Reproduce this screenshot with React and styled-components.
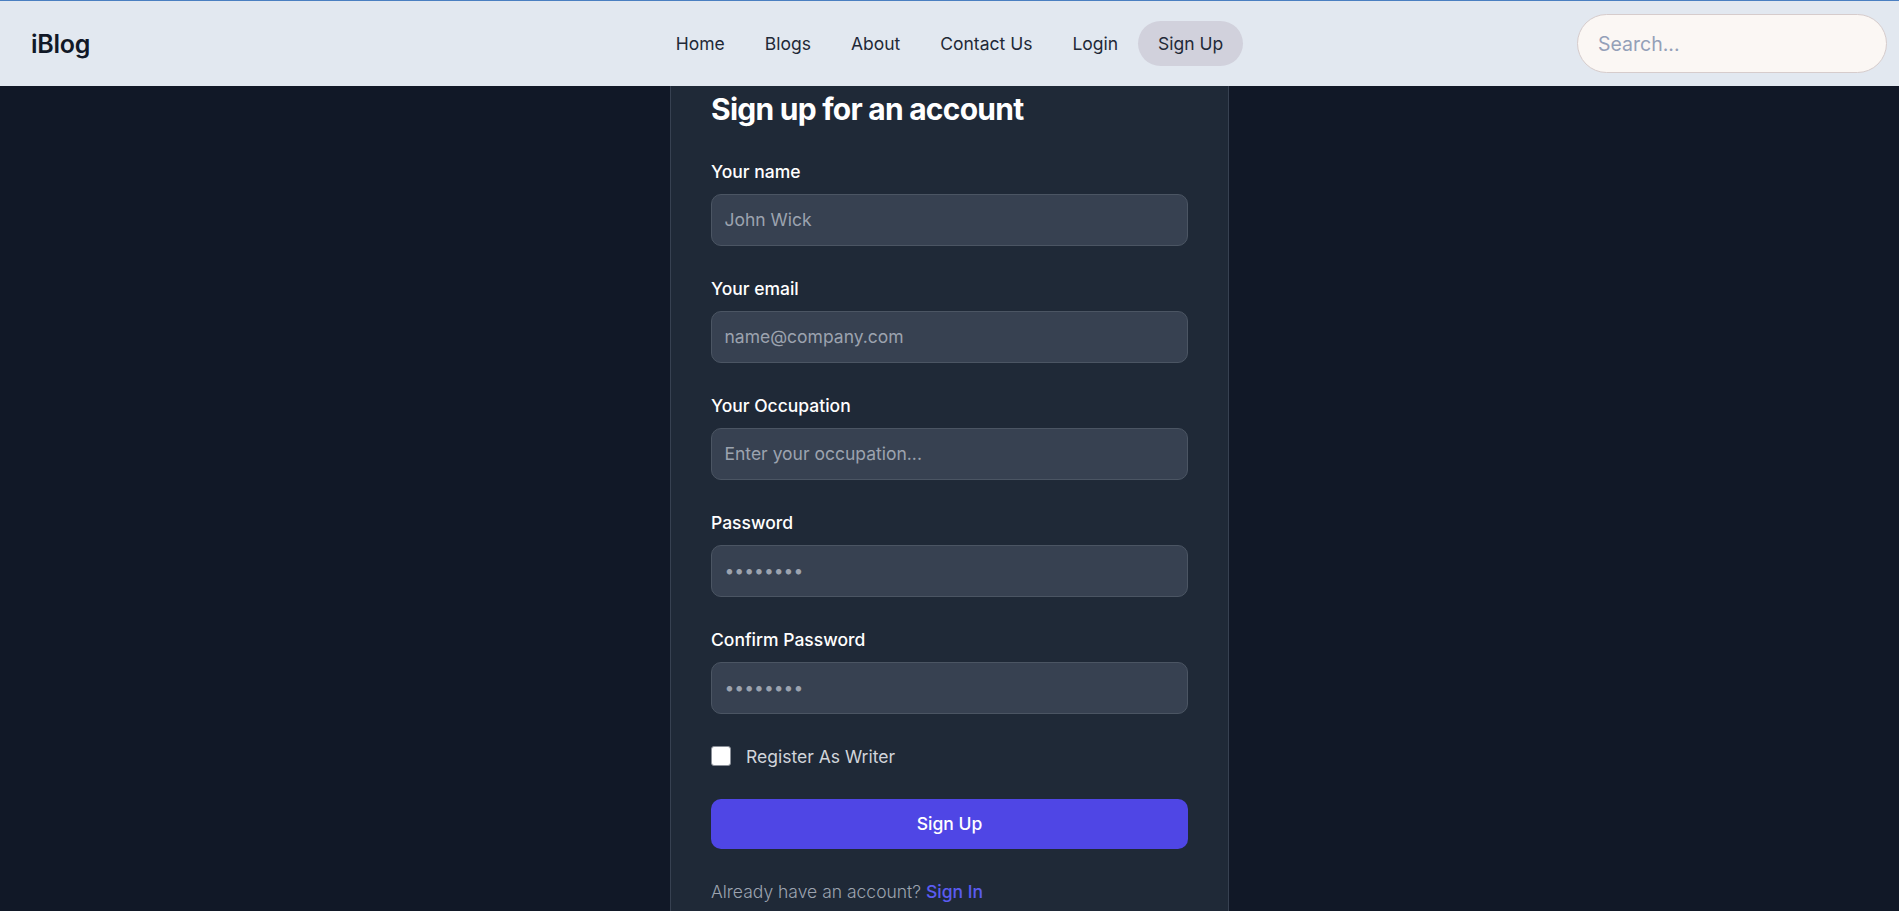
import React from "react";
import styled, { createGlobalStyle } from "styled-components";

const GlobalStyle = createGlobalStyle`
  * { box-sizing: border-box; }
  html, body {
    margin: 0;
    padding: 0;
    background: #111827;
    font-family: Inter, "Noto Sans", "Liberation Sans", sans-serif;
    overflow: hidden;
  }
`;

//#region Navbar
const Nav = styled.nav`
  height: 86px;
  border-top: 1px solid #4a7fc1;
  background: #e2e8f0;
  display: grid;
  grid-template-columns: 1fr auto 1fr;
  align-items: center;
  padding: 0 12px;
`;

const Brand = styled.div`
  margin-left: 19px;
  font-size: 25px;
  font-weight: 600;
  color: #111827;
  letter-spacing: -0.01em;
`;

const Links = styled.ul`
  display: flex;
  align-items: center;
  list-style: none;
  margin: 0;
  padding: 0;
`;

const LinkItem = styled.li`
  font-size: 17.5px;
  line-height: 25px;
  color: #1f2937;
  padding: 10px 20px;
  border-radius: 999px;
  background: ${(p) => (p.active ? "#d1d1dc" : "transparent")};
  cursor: pointer;
`;

const Search = styled.input`
  justify-self: end;
  width: 310px;
  height: 59px;
  border-radius: 999px;
  border: 1px solid #d6cccc;
  background: #fbf7f4;
  padding: 0 20px;
  font-family: inherit;
  font-size: 19.5px;
  outline: none;
  &::placeholder {
    color: #94a0b8;
  }
`;
//#endregion

//#region Form
const Main = styled.main`
  display: flex;
  justify-content: center;
`;

const Card = styled.div`
  width: 559px;
  background: #1f2937;
  border: 1px solid #374151;
  border-top: none;
  padding: 5px 40px 40px;
  display: flex;
  flex-direction: column;
  gap: 30px;
`;

const Title = styled.h1`
  margin: 0;
  font-size: 30px;
  line-height: 37.5px;
  font-weight: 700;
  letter-spacing: -0.025em;
  color: #ffffff;
`;

const Field = styled.div`
  display: flex;
  flex-direction: column;
`;

const Label = styled.label`
  font-size: 17.5px;
  line-height: 25px;
  font-weight: 500;
  color: #ffffff;
  margin-bottom: 10px;
`;

const Input = styled.input`
  width: 100%;
  height: 52px;
  background: #374151;
  border: 1px solid #4b5563;
  border-radius: 10px;
  padding: 0 12.5px;
  font-family: inherit;
  font-size: 17.5px;
  color: #ffffff;
  outline: none;
  &::placeholder {
    color: #9ca3af;
  }
`;

const CheckRow = styled.label`
  display: flex;
  align-items: center;
  gap: 15px;
  font-size: 17.5px;
  line-height: 25px;
  color: #d1d5db;
`;

const Check = styled.input`
  appearance: none;
  margin: 0;
  width: 20px;
  height: 20px;
  background: #ffffff;
  border: 1px solid #8a8f98;
  border-radius: 3px;
`;

const Button = styled.button`
  height: 50px;
  width: 100%;
  border: none;
  border-radius: 10px;
  background: #4f46e5;
  color: #ffffff;
  font-family: inherit;
  font-size: 17.5px;
  font-weight: 500;
  cursor: pointer;
`;

const Footer = styled.p`
  margin: 0;
  font-size: 17.5px;
  line-height: 25px;
  font-weight: 300;
  color: #9ca3af;
`;

const SignIn = styled.a`
  font-weight: 500;
  color: #5b5cf0;
  text-decoration: none;
`;
//#endregion

const fields = [
  { label: "Your name", type: "text", placeholder: "John Wick" },
  { label: "Your email", type: "email", placeholder: "name@company.com" },
  { label: "Your Occupation", type: "text", placeholder: "Enter your occupation..." },
  { label: "Password", type: "password", placeholder: "••••••••" },
  { label: "Confirm Password", type: "password", placeholder: "••••••••" },
];

function App() {
  return (
    <>
      <GlobalStyle />
      <Nav>
        <Brand>iBlog</Brand>
        <Links>
          <LinkItem>Home</LinkItem>
          <LinkItem>Blogs</LinkItem>
          <LinkItem>About</LinkItem>
          <LinkItem>Contact Us</LinkItem>
          <LinkItem>Login</LinkItem>
          <LinkItem active>Sign Up</LinkItem>
        </Links>
        <Search placeholder="Search..." />
      </Nav>
      <Main>
        <Card>
          <Title>Sign up for an account</Title>
          {fields.map((f, key) => (
            <Field key={key}>
              <Label>{f.label}</Label>
              <Input type={f.type} placeholder={f.placeholder} />
            </Field>
          ))}
          <CheckRow>
            <Check type="checkbox" />
            Register As Writer
          </CheckRow>
          <Button>Sign Up</Button>
          <Footer>
            Already have an account? <SignIn href="#">Sign In</SignIn>
          </Footer>
        </Card>
      </Main>
    </>
  );
}

export default App;
